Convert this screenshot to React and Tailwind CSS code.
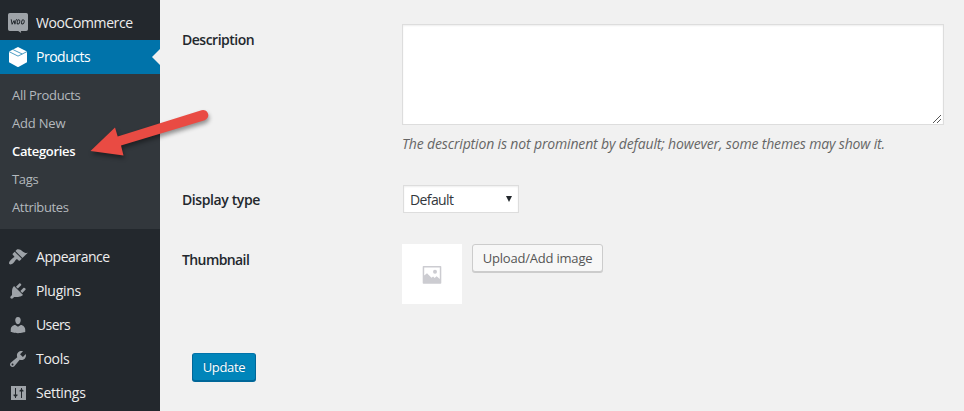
import React from "react";

const WooIcon = () => (
  <svg width="20" height="20" viewBox="0 0 20 20" fill="#9ea3a8">
    <path d="M1.800 0h16.400Q20 0 20 1.800v14.400Q20 18 18.200 18h-5.400l.4 2-3-2H1.800Q0 18 0 16.200V1.800Q0 0 1.800 0z" />
    <g fill="none" stroke="#23282d" strokeWidth="1">
      <path d="M3.200 6.300l.9 5 2-3.700.8 3.600q.4-3.200 1.700-5" />
      <ellipse cx="10.500" cy="8.900" rx="1.300" ry="2.100" transform="rotate(15 10.500 8.900)" />
      <ellipse cx="14.900" cy="8.900" rx="1.300" ry="2.100" transform="rotate(15 14.900 8.900)" />
    </g>
  </svg>
);

const BoxIcon = () => (
  <svg width="20" height="20" viewBox="0 0 20 20">
    <path d="M10 0l9 4.500v10.700L10 20.200 1 15.200V4.500z" fill="#fff" />
    <path d="M1 4.600l9 4.500 9-4.500M5.200 2.700l9 4.300" fill="none" stroke="#0073aa" strokeWidth=".7" />
  </svg>
);

const BrushIcon = () => (
  <svg width="20" height="20" viewBox="0 0 20 20" fill="#9ea3a8">
    <path d="M14.480 11.060L7.410 3.990l1.500-1.500c.5-.56 2.300-.47 3.510.32 1.210.8 1.430 1.280 2.910 2.100 1.180.64 2.450 1.260 4.450.85zm-.71.710L6.700 4.700 4.930 6.470c-.39.390-.39 1.020 0 1.410l1.060 1.060c.39.390.39 1.030 0 1.420-.6.600-1.430 1.110-2.210 1.690-.35.260-.7.530-1.010.84C1.430 14.230.4 16.080 1.400 17.070c.99 1 2.840-.03 4.180-1.360.31-.31.580-.66.850-1.020.57-.78 1.080-1.610 1.690-2.210.39-.39 1.020-.39 1.410 0l1.060 1.060c.39.390 1.020.390 1.410 0z" />
  </svg>
);

const PlugIcon = () => (
  <svg width="20" height="20" viewBox="0 0 20 20" fill="#9ea3a8">
    <path d="M13.110 4.360L9.870 7.600 8 5.730l3.240-3.240c.350-.34 1.050-.2 1.560.32.520.510.660 1.210.310 1.550zm-8 1.770l.910-1.120 9.010 9.010-1.190.84c-.710.710-2.630 1.160-3.820 1.160H6.140L4.900 17.260c-.59.590-1.540.590-2.120 0-.59-.58-.59-1.530 0-2.120l1.240-1.240v-3.880c0-1.130.4-3.190 1.090-3.890zm7.260 3.970l3.240-3.240c.340-.35 1.040-.21 1.550.310.520.510.660 1.210.310 1.550l-3.240 3.250z" />
  </svg>
);

const UserIcon = () => (
  <svg width="20" height="20" viewBox="0 0 20 20" fill="#9ea3a8">
    <path d="M10 9.250c-2.270 0-2.730-3.440-2.730-3.440C7 4.020 7.820 2 9.970 2c2.160 0 2.980 2.020 2.710 3.810 0 0-.41 3.440-2.680 3.440zm0 2.570L12.720 10c2.390 0 4.520 2.330 4.520 4.530v2.490s-3.650 1.130-7.240 1.130c-3.650 0-7.240-1.130-7.240-1.130v-2.490c0-2.250 1.940-4.480 4.470-4.480z" />
  </svg>
);

const WrenchIcon = () => (
  <svg width="20" height="20" viewBox="0 0 20 20" fill="#9ea3a8">
    <path d="M16.680 9.770c-1.340 1.340-3.300 1.670-4.950.99l-5.410 6.520c-.99.990-2.590.990-3.580 0s-.99-2.590 0-3.570l6.520-5.420c-.68-1.650-.35-3.610.99-4.950 1.280-1.280 3.120-1.620 4.720-1.060l-2.890 2.890 2.820 2.820 2.860-2.870c.530 1.580.180 3.390-1.080 4.650zM3.810 16.210c.4.390 1.040.390 1.430 0 .4-.4.400-1.040 0-1.430-.39-.4-1.030-.4-1.430 0-.39.390-.39 1.030 0 1.430z" />
  </svg>
);

const SettingsIcon = () => (
  <svg width="20" height="20" viewBox="0 0 20 20">
    <path d="M3 3h15v14H3z" fill="#9ea3a8" />
    <path d="M7.500 5v10M13.500 5v10M5.500 12h4M11.500 8h4" stroke="#23282d" strokeWidth="1" />
    <path d="M5.500 12h4l-2 2.500zM11.500 8h4l-2-2.500z" fill="#23282d" />
  </svg>
);

const MenuItem = ({ icon, label, spacing, active }) => (
  <li className={"flex h-[34px] items-center gap-2 pl-2 text-[14px] " + (active ? "justify-between bg-[#0073aa] text-white" : "text-[#eee]")}>
    <span className="flex items-center gap-2">
      {icon}
      <span className={"pb-0.5 " + spacing}>{label}</span>
    </span>
    {active && (
      <svg width="8" height="16" viewBox="0 0 8 16"><path d="M8 0v16L0 8z" fill="#f1f1f1" /></svg>
    )}
  </li>
);

const submenu = [
  ["All Products", "tracking-[-0.3px]"],
  ["Add New", "tracking-[-0.2px]"],
  ["Categories", "font-semibold text-white tracking-[-0.35px]"],
  ["Tags", "tracking-[-0.3px]"],
  ["Attributes", "tracking-[-0.35px]"],
];

const Label = ({ children, className }) => (
  <div className={"w-[220px] shrink-0 text-[14px] leading-5 font-semibold text-[#23282d] " + className}>{children}</div>
);

export default function App() {
  return (
    <div className="relative flex h-[411px] w-[964px] overflow-hidden bg-[#f1f1f1] font-['Open_Sans','Noto_Sans',sans-serif]">
      <nav className="w-40 shrink-0 bg-[#23282d] pt-1.5">
        <ul>
          <MenuItem icon={<WooIcon />} label="WooCommerce" spacing="tracking-[-0.4px]" />
          <MenuItem icon={<BoxIcon />} label="Products" spacing="tracking-[-0.5px]" active />
        </ul>
        <ul className="h-[155px] bg-[#32373c] pt-[7px] pl-3 text-[13px] text-[#b4b9be]">
          {submenu.map(([label, style]) => (
            <li key={label} className={"h-7 leading-7 " + style}>{label}</li>
          ))}
        </ul>
        <ul className="pt-[11px]">
          <MenuItem icon={<BrushIcon />} label="Appearance" spacing="tracking-[-0.45px]" />
          <MenuItem icon={<PlugIcon />} label="Plugins" spacing="tracking-[-0.3px]" />
          <MenuItem icon={<UserIcon />} label="Users" spacing="tracking-[-0.6px]" />
          <MenuItem icon={<WrenchIcon />} label="Tools" spacing="tracking-[-0.3px]" />
          <MenuItem icon={<SettingsIcon />} label="Settings" spacing="tracking-[-0.3px]" />
        </ul>
      </nav>

      <main className="flex-1 pt-6 pl-[22px]">
        <section className="flex h-[161px]">
          <Label className="pt-1.5 tracking-[-0.5px]">Description</Label>
          <div>
            <div className="flex h-[101px] w-[542px] items-end justify-end border border-[#ddd] bg-white shadow-[inset_0_1px_2px_rgba(0,0,0,0.07)]">
              <svg width="10" height="10" viewBox="0 0 10 10" stroke="#555" strokeWidth="1"><path d="M0 9L8 1M4 9l4-4" /></svg>
            </div>
            <p className="mt-[9px] text-[14px] leading-5 whitespace-nowrap text-[#666] italic tracking-[-0.15px]">
              The description is not prominent by default; however, some themes may show it.
            </p>
          </div>
        </section>

        <section className="flex h-[59px]">
          <Label className="pt-[5px] tracking-[-0.4px]">Display type</Label>
          <div className="ml-px flex h-7 w-[116px] items-center justify-between border border-[#ddd] bg-white pr-1.5 pl-1.5 text-[14px] text-[#32373c] shadow-[inset_0_1px_2px_rgba(0,0,0,0.07)]">
            <span className="tracking-[-0.6px]">Default</span>
            <svg width="6" height="6" viewBox="0 0 6 6"><path d="M0 0h6L3 6z" fill="#23282d" /></svg>
          </div>
        </section>

        <section className="flex h-[109px]">
          <Label className="pt-1.5 tracking-[-0.6px]">Thumbnail</Label>
          <div className="flex size-[60px] items-center justify-center bg-white">
            <svg width="20" height="20" viewBox="0 0 20 20" fill="#ccccd1">
              <path fillRule="evenodd" d="M1.500 2h17a.8.8 0 01.8.8v16.200a.8.8 0 01-.8.8h-17a.8.8 0 01-.8-.8V2.800A.8.8 0 011.500 2zM2.200 3.500v8L5 9.200l4.500 4.500 1.600-1.300 1.500 1.500 2-1.700 3.200 2.800V3.500z" />
              <circle cx="13" cy="7.700" r="2" />
            </svg>
          </div>
          <button className="ml-2.5 flex h-7 w-[131px] items-center justify-center rounded-[3px] border border-[#ccc] bg-[#f7f7f7] pt-px text-[13px] whitespace-nowrap text-[#555] shadow-[0_1px_0_#ccc] tracking-[-0.2px]">
            Upload/Add image
          </button>
        </section>

        <button className="ml-2.5 flex h-7 w-16 items-center justify-center rounded-[3px] border border-t-[#0073aa] border-r-[#006799] border-b-[#006799] border-l-[#006799] bg-[#0085ba] pt-0.5 text-[13px] text-white shadow-[0_1px_0_#006799] [text-shadow:0_-1px_1px_#006799] tracking-[-0.3px]">
          Update
        </button>
      </main>

      <svg className="absolute top-[100px] left-[80px] drop-shadow-[1px_3px_2px_rgba(0,0,0,0.4)]" width="140" height="70" viewBox="80 100 140 70">
        <path d="M90.500 151L115 127.500l2.700 9L201.500 110.300a5.200 5.200 0 013.200 9.900L121 145.500l2.500 10z" fill="#e94b43" />
      </svg>
    </div>
  );
}
